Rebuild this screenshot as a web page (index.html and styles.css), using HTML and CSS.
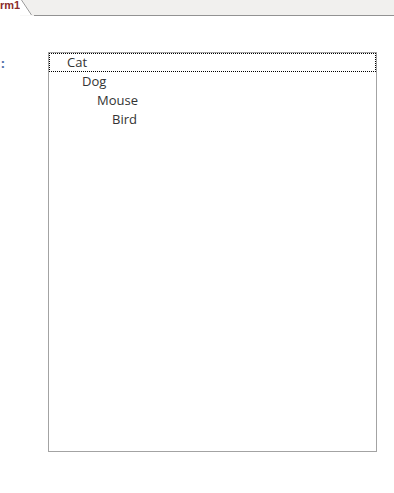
FILE: index.html
```html
<!DOCTYPE html>
<html>
<head>
<meta charset="utf-8">
<link rel="stylesheet" href="styles.css">
</head>
<body>
<div class="tabbar">
  <div class="tab">
    <span class="tab-text">rm1</span>
    <svg class="tab-edge" width="14" height="16" viewBox="0 0 14 16">
      <path d="M0 0 H2 L12.5 15.5 H0 Z" fill="#ffffff"/>
      <path d="M1.5 0 L11.5 15" stroke="#9a9a9a" stroke-width="1" fill="none"/>
    </svg>
  </div>
  <div class="strip"></div>
</div>
<div class="content">
  <div class="label">:</div>
  <div class="tree">
    <div class="row focused lvl0">Cat</div>
    <div class="row lvl1">Dog</div>
    <div class="row lvl2">Mouse</div>
    <div class="row lvl3">Bird</div>
  </div>
</div>
</body>
</html>
```
FILE: styles.css
```css
html, body {
  margin: 0;
  padding: 0;
  background: #ffffff;
}
body {
  width: 394px;
  height: 493px;
  overflow: hidden;
  font-family: "Open Sans", "Noto Sans", sans-serif;
}
.tabbar {
  display: flex;
  height: 16px;
}
.tab {
  display: flex;
  align-items: flex-start;
  background: #ffffff;
}
.tab-text {
  width: 20px;
  font-family: "Liberation Sans", Arial, sans-serif;
  font-weight: bold;
  font-size: 11px;
  line-height: 11px;
  color: #8b2b2b;
}
.tab-edge {
  display: block;
  background: #f1f0ee;
}
.strip {
  flex: 1;
  background: #f1f0ee;
  border-bottom: 1px solid #929292;
  height: 15px;
}
.content {
  display: flex;
  align-items: flex-start;
  padding-top: 36px;
}
.label {
  width: 48px;
  padding-left: 1px;
  box-sizing: border-box;
  margin-top: 3px;
  font-size: 13px;
  line-height: 16px;
  color: #4a6aa5;
  font-weight: bold;
}
.tree {
  width: 329px;
  height: 400px;
  box-sizing: border-box;
  border: 1px solid #a3a3a3;
  color: #333333;
  font-size: 13px;
}
.row {
  height: 19px;
  line-height: 19px;
  box-sizing: border-box;
}
.focused {
  border: 1px dotted #000000;
  line-height: 17px;
}
.lvl0 { padding-left: 17px; }
.lvl1 { padding-left: 33px; }
.lvl2 { padding-left: 48px; }
.lvl3 { padding-left: 63px; }
```
